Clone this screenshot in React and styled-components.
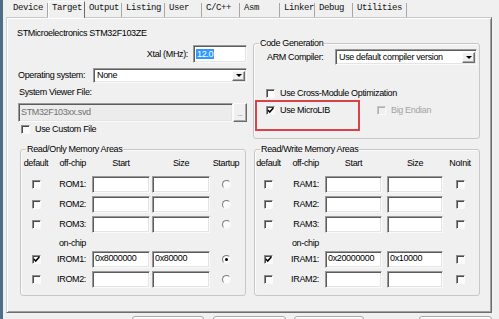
import React from "react";
import styled, { createGlobalStyle } from "styled-components";

const GlobalStyle = createGlobalStyle`
  html, body {
    margin: 0;
    padding: 0;
  }
  body {
    width: 499px;
    height: 319px;
    overflow: hidden;
    background: #f0f0f0;
    color: #000;
    font-family: "Liberation Sans", Arial, sans-serif;
    font-size: 9px;
    letter-spacing: -0.35px;
  }
`;

const Window = styled.div`
  display: flex;
  width: 499px;
  height: 319px;
  overflow: hidden;
`;

const Frame = styled.div`
  flex: none;
  width: 3px;
  background: #4e6d86;
`;

const Main = styled.div`
  display: flex;
  flex-direction: column;
  padding-left: 3px;
`;

const TabBar = styled.div`
  display: flex;
  flex: none;
  height: 17px;
  padding-left: 3px;
`;

const Tab = styled.div`
  box-sizing: border-box;
  width: ${(p) => p.$w}px;
  height: ${(p) => (p.$active ? 17 : 14)}px;
  margin-top: ${(p) => (p.$active ? 1 : 3)}px;
  padding: ${(p) => (p.$active ? "1px 0 0 3px" : "0 0 0 4px")};
  border-right: 1px solid ${(p) => (p.$active ? "#6a6a6a" : "#a8a8a8")};
  border-left: ${(p) => (p.$active ? "1px solid #fff" : "0")};
  border-top: ${(p) => (p.$active ? "1px solid #fff" : "0")};
  background: #f0f0f0;
  position: relative;
  z-index: ${(p) => (p.$active ? 1 : 0)};
  font-family: "Liberation Mono", "Courier New", monospace;
  font-size: 9px;
  line-height: 11px;
  letter-spacing: -0.4px;
  color: #111;
  white-space: nowrap;
`;

const Page = styled.div`
  box-sizing: border-box;
  flex: none;
  width: 486px;
  height: 296px;
  padding: 10px 0 0 10px;
  border: 1px solid;
  border-color: #c8c8c8 #6e6e6e #6e6e6e #d0d0d0;
  box-shadow: inset 1px 1px 0 #fff, inset -1px -1px 0 #a0a0a0;
`;

const TopGrid = styled.div`
  display: grid;
  grid-template-columns: 230px 227px;
  column-gap: 6px;
  align-items: start;
`;

const Column = styled.div`
  display: flex;
  flex-direction: column;
  padding-top: ${(p) => p.$top || 0}px;
`;

const Title = styled.div`
  line-height: 11px;
  white-space: nowrap;
`;

const Row = styled.div`
  display: flex;
  flex: none;
  align-items: center;
  justify-content: ${(p) => (p.$end ? "flex-end" : "flex-start")};
  gap: ${(p) => p.$gap || 0}px;
  height: ${(p) => p.$h}px;
  margin-top: ${(p) => p.$mt || 0}px;
  padding-left: ${(p) => p.$pl || 0}px;
  position: relative;
  white-space: nowrap;
`;

const Label = styled.span`
  flex: none;
  width: ${(p) => (p.$w ? `${p.$w}px` : "auto")};
  color: ${(p) => (p.$disabled ? "#a3a3a3" : "#000")};
  line-height: 11px;
`;

const Caption = styled.div`
  margin-top: 4px;
  padding-left: 2px;
  line-height: 11px;
`;

const Field = styled.div`
  box-sizing: border-box;
  display: flex;
  align-items: ${(p) => (p.$top ? "flex-start" : "center")};
  flex: none;
  width: ${(p) => p.$w}px;
  height: ${(p) => p.$h || 17}px;
  margin-left: ${(p) => p.$ml || 0}px;
  padding: ${(p) => (p.$top ? "1px 0 0 2px" : "0 0 0 2px")};
  background: ${(p) => (p.$disabled ? "#ececec" : "#fff")};
  color: ${(p) => (p.$disabled ? "#707070" : "#000")};
  border: 1px solid;
  border-color: #9a9a9a #fafafa #fafafa #9a9a9a;
  box-shadow: inset 1px 1px 0 #5c5c5c, inset -1px -1px 0 #e4e4e4;
  line-height: 11px;
  white-space: nowrap;
  overflow: hidden;
`;

const Highlight = styled.span`
  background: #3399ff;
  color: #fff;
  line-height: 10px;
  padding: 0 1px;
`;

const SelectText = styled.span`
  flex: 1;
  padding-left: 1px;
  line-height: 11px;
`;

const DropButton = styled.span`
  box-sizing: border-box;
  display: flex;
  align-items: center;
  justify-content: center;
  flex: none;
  width: 13px;
  height: ${(p) => p.$h}px;
  margin-right: 1px;
  background: #f0f0f0;
  border: 1px solid;
  border-color: #fbfbfb #6a6a6a #6a6a6a #fbfbfb;
  box-shadow: inset -1px -1px 0 #a8a8a8;

  &::after {
    content: "";
    border-left: 3px solid transparent;
    border-right: 3px solid transparent;
    border-top: 3px solid #000;
  }
`;

const DotsButton = styled.div`
  box-sizing: border-box;
  display: flex;
  align-items: flex-end;
  justify-content: center;
  flex: none;
  width: 14px;
  height: 19px;
  padding-bottom: 4px;
  background: #f0f0f0;
  border: 1px solid;
  border-color: #fbfbfb #6a6a6a #6a6a6a #fbfbfb;
  box-shadow: inset -1px -1px 0 #a8a8a8;
  color: #7a7a7a;
  font-size: 7px;
  line-height: 7px;
`;

const CheckBox = styled.span`
  box-sizing: border-box;
  display: inline-flex;
  align-items: center;
  justify-content: center;
  flex: none;
  width: 9px;
  height: 9px;
  border: 1px solid;
  border-color: ${(p) =>
    p.$disabled ? "#c4c4c4 #fafafa #fafafa #c4c4c4" : "#8c8c8c #fafafa #fafafa #8c8c8c"};
  box-shadow: inset 1px 1px 0 ${(p) => (p.$disabled ? "#b0b0b0" : "#4a4a4a")};
  background: ${(p) => (p.$disabled ? "#f0f0f0" : "#fbfbfb")};
`;

const RadioBox = styled.span`
  box-sizing: border-box;
  display: inline-flex;
  align-items: center;
  justify-content: center;
  width: 9px;
  height: 9px;
  border-radius: 50%;
  border: 1px solid;
  border-color: #7c7c7c #f7f7f7 #f7f7f7 #7c7c7c;
  background: #fbfbfb;

  &::after {
    content: "";
    width: 3px;
    height: 3px;
    border-radius: 50%;
    background: ${(p) => (p.$on ? "#000" : "transparent")};
  }
`;

const Group = styled.fieldset`
  box-sizing: border-box;
  min-width: 0;
  margin: 0;
  padding: 0;
  border: 1px solid #c7c7c7;
  border-radius: 3px;
  box-shadow: inset 1px 1px 0 #fbfbfb;
`;

const Legend = styled.legend`
  margin-left: 5px;
  padding: 0 1px;
  line-height: 10px;
  white-space: nowrap;
`;

const GroupBody = styled.div`
  padding: ${(p) => p.$pad};
`;

const Annotation = styled.div`
  position: absolute;
  left: -11px;
  top: -5px;
  box-sizing: border-box;
  width: 105px;
  height: 31px;
  border: 2px solid #d8424b;
  pointer-events: none;
`;

const BottomGrid = styled.div`
  display: grid;
  grid-template-columns: 226px 226px;
  column-gap: 8px;
  margin: 5px 0 0 3px;
`;

const MemGrid = styled.div`
  display: grid;
  grid-template-columns: ${(p) => p.$cols};
  row-gap: 3px;
  align-items: center;
  padding: 4px 0 7px 0;
`;

const HeadCell = styled.div`
  margin-bottom: 4px;
  line-height: 11px;
  white-space: nowrap;
  text-align: ${(p) => p.$align || "center"};
  width: ${(p) => (p.$w ? `${p.$w}px` : "auto")};
  padding-right: ${(p) => (p.$align === "right" ? 6 : 0)}px;
`;

const MarkCell = styled.div`
  grid-column: 1;
  display: flex;
  justify-content: center;
  height: 17px;
  align-items: center;
`;

const NameCell = styled.div`
  text-align: right;
  padding-right: 6px;
  line-height: 11px;
  white-space: nowrap;
`;

const LastCell = styled.div`
  display: flex;
  justify-content: center;
`;

const SubHead = styled.div`
  grid-column: 2;
  margin-top: 2px;
  text-align: right;
  padding-right: 6px;
  line-height: 10px;
  white-space: nowrap;
`;

const Footer = styled.div`
  display: flex;
  flex: none;
  padding: 3px 0 0 126px;
`;

const DialogButton = styled.div`
  box-sizing: border-box;
  flex: none;
  width: ${(p) => p.$w}px;
  height: 22px;
  margin-left: ${(p) => p.$ml}px;
  border: 1px solid #a9a9a9;
  border-radius: 3px;
  background: linear-gradient(#f6f6f6, #dddddd);
  box-shadow: inset 0 1px 0 #fff;
`;

const tabs = [
  { name: "Device", w: 39 },
  { name: "Target", w: 37, active: true },
  { name: "Output", w: 37 },
  { name: "Listing", w: 43 },
  { name: "User", w: 37 },
  { name: "C/C++", w: 38 },
  { name: "Asm", w: 40 },
  { name: "Linker", w: 35 },
  { name: "Debug", w: 38 },
  { name: "Utilities", w: 54 },
];

const readOnly = {
  title: "Read/Only Memory Areas",
  cols: "30px 41px 60px 58px 32px",
  startW: 58,
  sizeW: 58,
  last: "Startup",
  mark: "radio",
  off: [{ name: "ROM1:" }, { name: "ROM2:" }, { name: "ROM3:" }],
  on: [
    { name: "IROM1:", def: true, start: "0x8000000", size: "0x80000", on: true },
    { name: "IROM2:" },
  ],
};

const readWrite = {
  title: "Read/Write Memory Areas",
  cols: "27px 43px 62px 56px 34px",
  startW: 57,
  sizeW: 56,
  last: "NoInit",
  mark: "check",
  off: [{ name: "RAM1:" }, { name: "RAM2:" }, { name: "RAM3:" }],
  on: [
    { name: "IRAM1:", def: true, start: "0x20000000", size: "0x10000" },
    { name: "IRAM2:" },
  ],
};

// only the top edges of the dialog buttons show below the tab page
const buttons = [
  { id: "ok", w: 72, ml: 0 },
  { id: "cancel", w: 73, ml: 9 },
  { id: "defaults", w: 70, ml: 8 },
  { id: "help", w: 73, ml: 55 },
];

function Check({ checked, disabled }) {
  return (
    <CheckBox $disabled={disabled}>
      {checked && (
        <svg width="7" height="7" viewBox="0 0 7 7">
          <path d="M0.9 3.1 L2.7 5.1 L6.3 1.1" fill="none" stroke="#000" strokeWidth="1.5" />
        </svg>
      )}
    </CheckBox>
  );
}

function Select({ w, h, value }) {
  return (
    <Field $w={w} $h={h}>
      <SelectText>{value}</SelectText>
      <DropButton $h={h - 5} />
    </Field>
  );
}

function MemRow({ row, group }) {
  return (
    <>
      <MarkCell>
        <Check checked={row.def} />
      </MarkCell>
      <NameCell>{row.name}</NameCell>
      <Field $w={group.startW} $top>{row.start}</Field>
      <Field $w={group.sizeW} $top>{row.size}</Field>
      <LastCell>
        {group.mark === "radio" ? <RadioBox $on={row.on} /> : <Check />}
      </LastCell>
    </>
  );
}

function MemoryGroup({ group }) {
  return (
    <Group>
      <Legend>{group.title}</Legend>
      <MemGrid $cols={group.cols}>
        <HeadCell>default</HeadCell>
        <HeadCell $align="right">off-chip</HeadCell>
        <HeadCell $w={group.startW}>Start</HeadCell>
        <HeadCell $w={group.sizeW}>Size</HeadCell>
        <HeadCell>{group.last}</HeadCell>
        {group.off.map((row) => (
          <MemRow key={row.name} row={row} group={group} />
        ))}
        <SubHead>on-chip</SubHead>
        {group.on.map((row) => (
          <MemRow key={row.name} row={row} group={group} />
        ))}
      </MemGrid>
    </Group>
  );
}

export default function App() {
  return (
    <>
      <GlobalStyle />
      <Window>
        <Frame />
        <Main>
          <TabBar>
            {tabs.map((t) => (
              <Tab key={t.name} $w={t.w} $active={t.active}>
                {t.name}
              </Tab>
            ))}
          </TabBar>

          <Page>
            <TopGrid>
              <Column>
                <Title>STMicroelectronics STM32F103ZE</Title>
                <Row $end $gap={5} $h={18} $mt={6}>
                  <Label>Xtal (MHz):</Label>
                  <Field $w={54} $h={18}>
                    <Highlight>12.0</Highlight>
                  </Field>
                </Row>
                <Row $h={15} $mt={5} $pl={1}>
                  <Label $w={75}>Operating system:</Label>
                  <Select w={154} h={15} value="None" />
                </Row>
                <Caption>System Viewer File:</Caption>
                <Row $h={19} $mt={5}>
                  <Field $w={215} $h={19} $ml={1} $disabled>
                    STM32F103xx.svd
                  </Field>
                  <DotsButton>...</DotsButton>
                </Row>
                <Row $h={11} $mt={2} $pl={4} $gap={5}>
                  <Check />
                  <Label>Use Custom File</Label>
                </Row>
              </Column>

              <Column $top={10}>
                <Group>
                  <Legend>Code Generation</Legend>
                  <GroupBody $pad="1px 2px 22px 12px">
                    <Row $h={16} $pl={1}>
                      <Label $w={68}>ARM Compiler:</Label>
                      <Select w={142} h={16} value="Use default compiler version" />
                    </Row>
                    <Row $h={11} $mt={23} $gap={5}>
                      <Check />
                      <Label>Use Cross-Module Optimization</Label>
                    </Row>
                    <Row $h={11} $mt={6}>
                      <Annotation />
                      <Row $h={11} $gap={5} style={{ width: 111 }}>
                        <Check checked />
                        <Label>Use MicroLIB</Label>
                      </Row>
                      <Row $h={11} $gap={5}>
                        <Check disabled />
                        <Label $disabled>Big Endian</Label>
                      </Row>
                    </Row>
                  </GroupBody>
                </Group>
              </Column>
            </TopGrid>

            <BottomGrid>
              <MemoryGroup group={readOnly} />
              <MemoryGroup group={readWrite} />
            </BottomGrid>
          </Page>

          <Footer>
            {buttons.map((b) => (
              <DialogButton key={b.id} $w={b.w} $ml={b.ml} />
            ))}
          </Footer>
        </Main>
      </Window>
    </>
  );
}
